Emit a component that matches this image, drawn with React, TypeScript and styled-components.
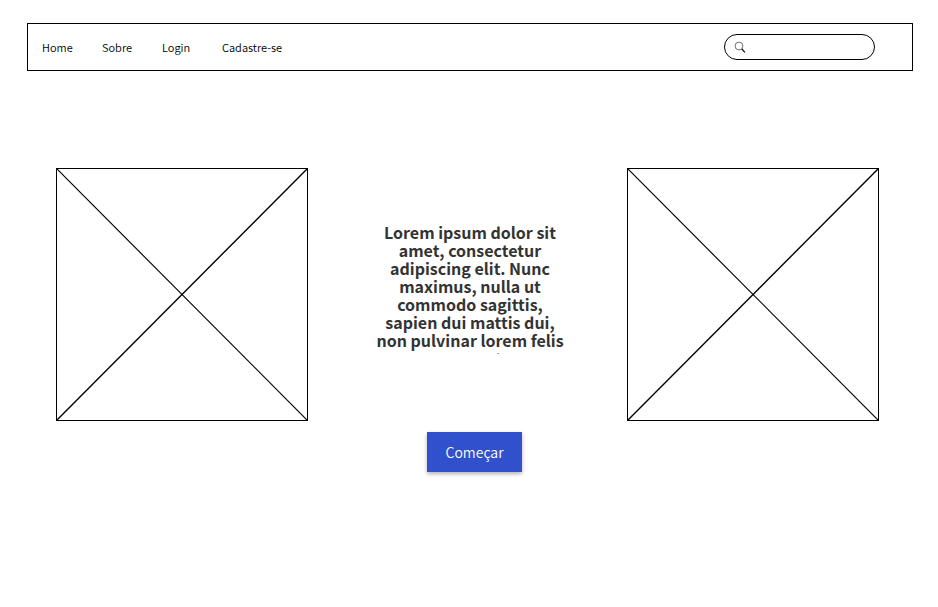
import React from "react";
import styled, { createGlobalStyle } from "styled-components";

const GlobalStyle = createGlobalStyle`
  *, *::before, *::after { box-sizing: border-box; }
  body {
    margin: 0;
    background: #fff;
    color: #000;
    font-family: "Noto Sans CJK SC", "Noto Sans", sans-serif;
    font-variant-ligatures: none;
  }
`;

const Page = styled.div`
  padding: 23px 25px 40px 27px;
`;

const Header = styled.header`
  display: flex;
  align-items: center;
  justify-content: space-between;
  min-height: 48px;
  padding: 0 37px 0 14px;
  border: 1px solid #000;
`;

const Nav = styled.nav`
  display: flex;
`;

const NavLink = styled.a`
  min-width: 60px;
  color: #000;
  font-size: 11px;
  font-weight: 350;
  line-height: 18px;
  text-decoration: none;
  white-space: nowrap;
`;

const SearchBox = styled.label`
  display: flex;
  align-items: center;
  gap: 6px;
  width: 151px;
  height: 26px;
  padding: 0 12px 0 9px;
  border: 1px solid #000;
  border-radius: 13px;
`;

const SearchInput = styled.input`
  flex: 1;
  min-width: 0;
  padding: 0;
  border: 0;
  outline: 0;
  background: transparent;
  font: inherit;
  font-size: 11px;
  line-height: 18px;
`;

const Hero = styled.main`
  display: grid;
  grid-template-columns: 252px minmax(200px, 1fr) 252px;
  align-items: start;
  margin-top: 97px;
  padding: 0 34px 0 29px;
`;

const Placeholder = styled.svg`
  display: block;
  width: 100%;
  height: 253px;
  border: 1px solid #000;
`;

const Content = styled.section`
  display: flex;
  flex-direction: column;
  align-items: center;
  gap: 78px;
  padding: 55px 0 0 14px;
`;

const Intro = styled.h1`
  width: 200px;
  max-height: 131px;
  margin: 0 9px 0 0;
  overflow: hidden;
  color: #333;
  font-size: 16px;
  font-weight: 700;
  line-height: 18px;
  text-align: center;
`;

const StartButton = styled.button`
  width: 95px;
  height: 40px;
  padding: 0;
  border: 0;
  background: #3151cc;
  box-shadow: 0 2px 4px rgba(0, 0, 0, 0.3);
  color: #fff;
  font-family: inherit;
  font-size: 14px;
  font-weight: 350;
  line-height: 22px;
  cursor: pointer;
`;

const links = ["Home", "Sobre", "Login", "Cadastre-se"];

function ImagePlaceholder() {
  return (
    <Placeholder viewBox="0 0 250 251" preserveAspectRatio="none" role="img" aria-label="Imagem">
      <path d="M0 0 250 251" stroke="#000" strokeWidth="1.15" fill="none" />
      <path d="M0 251 250 0" stroke="#000" strokeWidth="1.4" fill="none" />
    </Placeholder>
  );
}

function SearchIcon() {
  return (
    <svg width="12" height="12" viewBox="0 0 12 12" fill="none" aria-hidden="true">
      <circle cx="5" cy="5" r="3.9" stroke="#333" strokeWidth="0.7" />
      <path d="M7.8 8 10.9 11.4" stroke="#111" strokeWidth="1.3" />
    </svg>
  );
}

export default function App() {
  return (
    <>
      <GlobalStyle />
      <Page>
        <Header>
          <Nav>
            {links.map((label) => (
              <NavLink key={label} href="#">{label}</NavLink>
            ))}
          </Nav>
          <SearchBox>
            <SearchIcon />
            <SearchInput type="search" aria-label="Buscar" />
          </SearchBox>
        </Header>
        <Hero>
          <ImagePlaceholder />
          <Content>
            <Intro>
              Lorem ipsum dolor sit amet, consectetur adipiscing elit. Nunc maximus, nulla ut
              commodo sagittis, sapien dui mattis dui, non pulvinar lorem felis nec erat
            </Intro>
            <StartButton type="button">Começar</StartButton>
          </Content>
          <ImagePlaceholder />
        </Hero>
      </Page>
    </>
  );
}
